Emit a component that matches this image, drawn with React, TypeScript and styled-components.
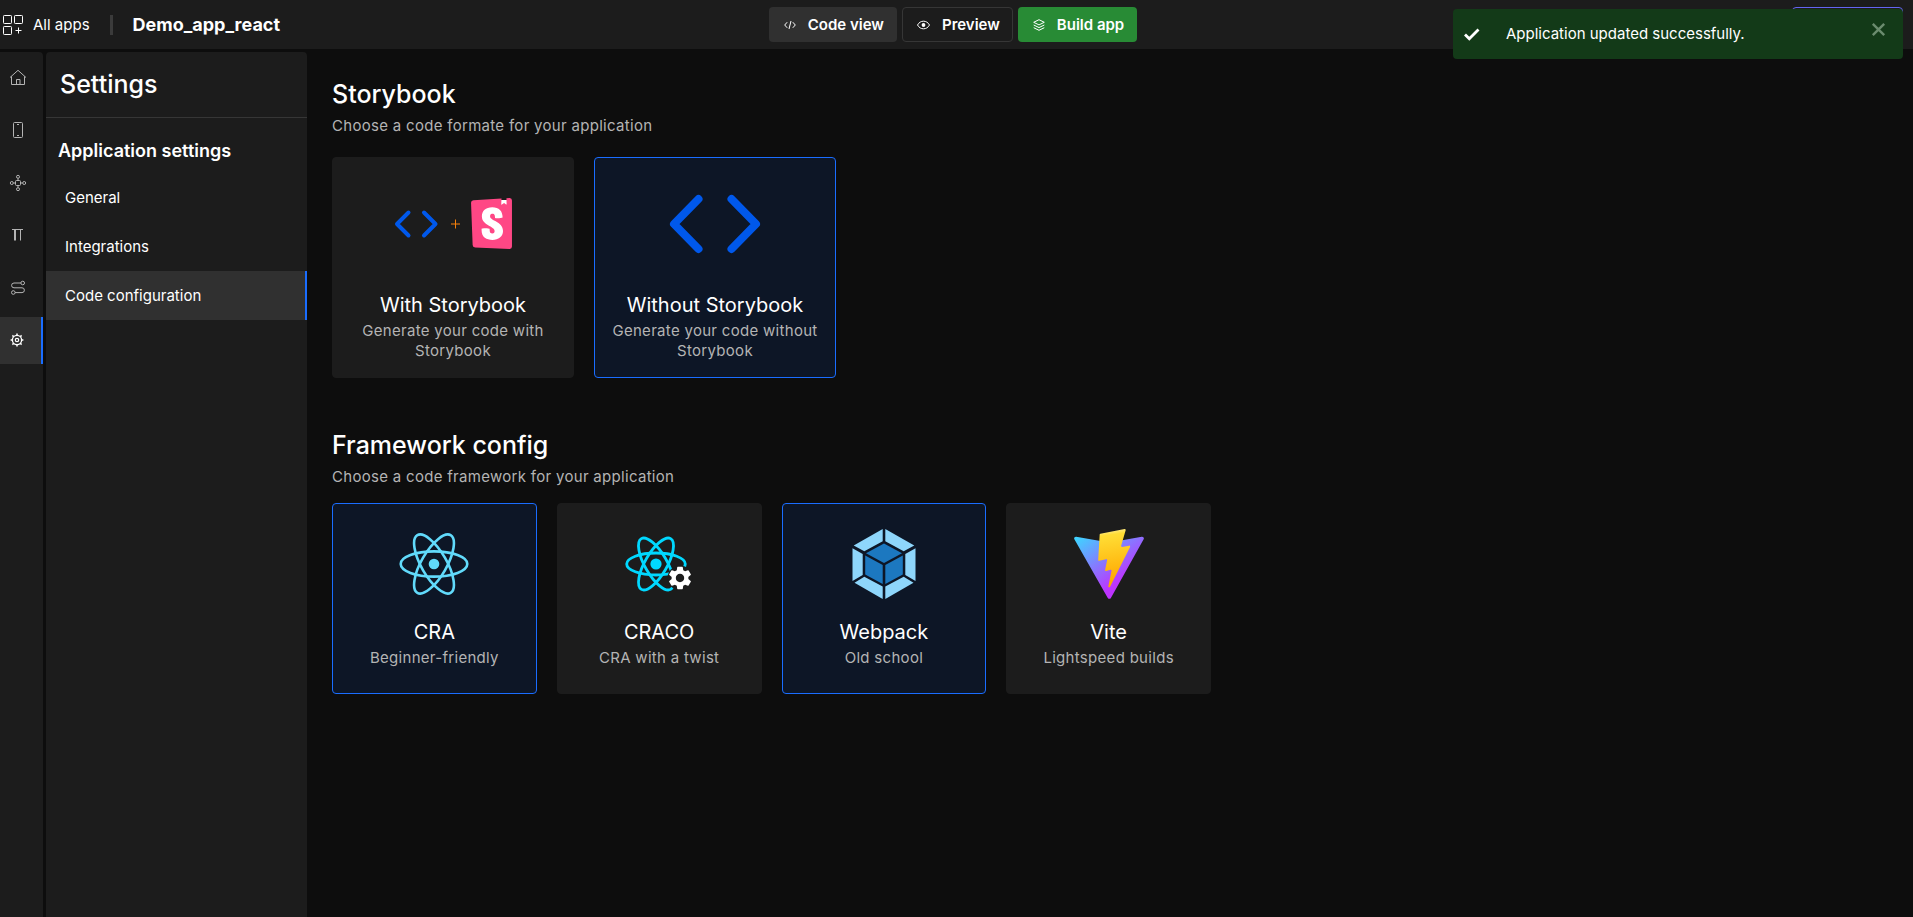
import React from "react";
import styled, { createGlobalStyle, css } from "styled-components";
import { SiStorybook } from "react-icons/si";
import { MdSettings } from "react-icons/md";

const GlobalStyle = createGlobalStyle`
  *, *::before, *::after { box-sizing: border-box; }
  body {
    margin: 0;
    background: #0d0d0d;
    color: #fff;
    font-family: Inter, "Liberation Sans", sans-serif;
    font-size: 15px;
    line-height: 20px;
  }
  h1, h2, h3, p, ul { margin: 0; padding: 0; }
  ul { list-style: none; }
  button { font: inherit; color: inherit; cursor: pointer; }
  a { color: inherit; text-decoration: none; }
  svg { display: block; flex: none; }
`;

const Page = styled.div`
  display: flex;
  flex-direction: column;
  gap: 3px;
  min-height: 100vh;
`;

const Header = styled.header`
  display: grid;
  grid-template-columns: 1fr auto 1fr;
  align-items: center;
  height: 49px;
  padding: 0 10px 0 3px;
  background: #1c1c1c;
`;

const Brand = styled.div`
  display: flex;
  align-items: center;
`;

const AllApps = styled.a`
  display: flex;
  align-items: center;
  gap: 10px;
`;

const Separator = styled.span`
  width: 3px;
  height: 20px;
  margin: 0 20px;
  background: #3b3b3b;
`;

const AppName = styled.h1`
  font-size: 18px;
  line-height: 24px;
  font-weight: 700;
`;

const Actions = styled.div`
  display: flex;
  gap: 5px;
`;

const ActionButton = styled.button<{ $tone: "filled" | "outline" | "primary" }>`
  display: flex;
  align-items: center;
  gap: 12px;
  height: 35px;
  padding: 0 12px 0 14px;
  border: 1px solid transparent;
  border-radius: 4px;
  font-weight: 600;
  background: transparent;
  ${({ $tone }) =>
    $tone === "filled"
      ? css`background: #303030;`
      : $tone === "primary"
        ? css`background: #288b35;`
        : css`border-color: #363636;`}
`;

const ProfileButton = styled.button`
  justify-self: end;
  width: 111px;
  height: 35px;
  border: 1px solid #6366f1;
  border-radius: 4px;
  background: transparent;
`;

const Body = styled.div`
  display: flex;
  flex: 1;
  gap: 3px;
`;

const Rail = styled.nav`
  width: 43px;
  padding-top: 2px;
  border-radius: 0 4px 0 0;
  background: #1c1c1c;
`;

const RailList = styled.ul`
  display: flex;
  flex-direction: column;
  justify-content: space-between;
  height: 310px;
`;

const RailLink = styled.a<{ $active?: boolean }>`
  display: flex;
  align-items: center;
  height: 47px;
  padding-left: 9px;
  color: ${({ $active }) => ($active ? "#fff" : "#b4b4b4")};
  background: ${({ $active }) => ($active ? "#303030" : "transparent")};
  border-right: 2px solid ${({ $active }) => ($active ? "#1a6dff" : "transparent")};
`;

const Sidebar = styled.aside`
  width: 261px;
  border-radius: 4px 4px 0 0;
  background: #1c1c1c;
`;

const SidebarTitle = styled.h2`
  padding: 16px 14px 17px;
  border-bottom: 1px solid #363636;
  font-size: 25px;
  line-height: 32px;
  font-weight: 500;
`;

const SidebarGroup = styled.h3`
  padding: 21px 12px 10px;
  font-size: 18px;
  line-height: 24px;
  font-weight: 600;
`;

const MenuLink = styled.a<{ $active?: boolean }>`
  display: flex;
  align-items: center;
  height: 49px;
  padding-left: 19px;
  background: ${({ $active }) => ($active ? "#303030" : "transparent")};
  border-right: 2px solid ${({ $active }) => ($active ? "#1a6dff" : "transparent")};
`;

const Main = styled.main`
  display: flex;
  flex: 1;
  flex-direction: column;
  gap: 51px;
  padding: 26px 22px;
`;

const SectionTitle = styled.h2`
  font-size: 25px;
  line-height: 32px;
  font-weight: 500;
`;

const SectionNote = styled.p`
  margin-top: 6px;
  color: #b4b4b4;
  letter-spacing: 0.02em;
`;

const Cards = styled.div<{ $columns: number; $width: number; $top: number }>`
  display: grid;
  grid-template-columns: repeat(${({ $columns }) => $columns}, 1fr);
  gap: 20px;
  max-width: ${({ $width }) => $width}px;
  margin-top: ${({ $top }) => $top}px;
`;

const Card = styled.button<{ $selected?: boolean; $large?: boolean }>`
  display: flex;
  flex-direction: column;
  align-items: center;
  padding: ${({ $large }) => ($large ? "0 12px 16px" : "8px 12px 25px")};
  border: 1px solid ${({ $selected }) => ($selected ? "#1a6dff" : "#1c1c1c")};
  border-radius: 4px;
  background: ${({ $selected }) => ($selected ? "#0d1626" : "#1c1c1c")};
`;

const CardArt = styled.span<{ $large?: boolean }>`
  display: flex;
  align-items: center;
  justify-content: center;
  height: ${({ $large }) => ($large ? 131 : 104)}px;
`;

const CardTitle = styled.span`
  font-size: 20px;
  line-height: 32px;
`;

const CardNote = styled.span`
  color: #b4b4b4;
  letter-spacing: 0.02em;
`;

const Toast = styled.div`
  position: fixed;
  top: 9px;
  right: 10px;
  display: flex;
  align-items: center;
  width: 450px;
  height: 50px;
  padding: 0 17px 0 10px;
  border-radius: 4px;
  background: #133a18;
`;

const ToastText = styled.p`
  flex: 1;
  margin-left: 26px;
`;

const CloseButton = styled.button`
  align-self: flex-start;
  margin-top: 13px;
  padding: 0;
  border: 0;
  background: none;
  color: #6b8b6e;
`;

const stroke = { fill: "none", stroke: "currentColor" } as const;

const AppsIcon = () => (
  <svg width="20" height="20" viewBox="0 0 20 20" {...stroke} aria-hidden="true">
    <rect x=".5" y=".5" width="8" height="8" rx=".8" />
    <rect x="11.5" y=".5" width="8" height="8" rx=".8" />
    <rect x=".5" y="11.5" width="8" height="8" rx=".8" />
    <path d="M15.5 12.5v6M12.5 15.5h6" />
  </svg>
);

const HomeIcon = () => (
  <svg width="18" height="18" viewBox="0 0 18 18" {...stroke} aria-hidden="true">
    <path d="M1 8.500 9 1.300 17 8.500M2.500 7.400v8.100h13V7.400M7.500 15.500v-5h3.500v5" />
  </svg>
);

const PhoneIcon = () => (
  <svg width="18" height="18" viewBox="0 0 18 18" {...stroke} aria-hidden="true">
    <rect x="4.500" y="1.500" width="9" height="15" rx="1" />
    <path d="M8 3.500h2M8 14.500h2" />
  </svg>
);

const NodesIcon = () => (
  <svg width="18" height="18" viewBox="0 0 18 18" {...stroke} aria-hidden="true">
    <rect x="6.500" y="6.500" width="5" height="5" rx="1" />
    <circle cx="9" cy="2.800" r="1.500" />
    <circle cx="9" cy="15.200" r="1.500" />
    <circle cx="2.800" cy="9" r="1.500" />
    <circle cx="15.200" cy="9" r="1.500" />
    <path d="M9 4.400v2M9 11.500v2M4.400 9h2M11.500 9h2" />
  </svg>
);

const PiIcon = () => (
  <svg width="18" height="18" viewBox="0 0 18 18" {...stroke} aria-hidden="true">
    <path d="M3 3.500h11M11.500 3.500v11" />
    <path d="M6 3.500v11" strokeWidth="2" />
  </svg>
);

const RouteIcon = () => (
  <svg width="18" height="18" viewBox="0 0 18 18" {...stroke} aria-hidden="true">
    <circle cx="13.700" cy="4" r="1.800" />
    <circle cx="4.300" cy="13.500" r="1.800" />
    <path d="M12 4H5a2.400 2.400 0 0 0 0 4.800h8a2.400 2.400 0 0 1 0 4.800H6" />
  </svg>
);

const GearIcon = () => (
  <svg width="16" height="16" viewBox="0 0 16 16" {...stroke} aria-hidden="true">
    <circle cx="8" cy="8" r="4.600" strokeWidth="1.300" />
    <circle cx="8" cy="8" r="1.700" strokeWidth="1.200" />
    <path
      strokeWidth="1.500"
      d="M8 3.400V1.600M8 12.600v1.800M3.400 8H1.600M12.600 8h1.800M4.700 4.700 3.400 3.400M11.300 4.700l1.300-1.300M4.700 11.300l-1.300 1.300M11.300 11.300l1.300 1.300"
    />
  </svg>
);

const CodeIcon = () => (
  <svg width="12" height="10" viewBox="0 0 12 10" {...stroke} aria-hidden="true">
    <path d="M3.200 2.200.7 5l2.500 2.800M8.800 2.200 11.300 5 8.800 7.800M7 1 5 9" />
  </svg>
);

const EyeIcon = () => (
  <svg width="13" height="10" viewBox="0 0 13 10" {...stroke} aria-hidden="true">
    <path d="M.5 5C2 2.400 4 1.200 6.500 1.200S11 2.400 12.500 5C11 7.600 9 8.800 6.500 8.800S2 7.600.5 5Z" />
    <circle cx="6.500" cy="5" r="1.900" fill="currentColor" stroke="none" />
  </svg>
);

const LayersIcon = () => (
  <svg width="12" height="12" viewBox="0 0 12 12" {...stroke} aria-hidden="true">
    <path d="M6 .7 11.300 3.300 6 5.900.7 3.300ZM.7 6 6 8.600 11.300 6M.7 8.700 6 11.300l5.300-2.600" />
  </svg>
);

const CheckIcon = () => (
  <svg width="17" height="14" viewBox="0 0 17 14" aria-hidden="true">
    <path d="M2 7.500 6.300 11.800 15.500 2.600" fill="none" stroke="#fff" strokeWidth="2.800" />
  </svg>
);

const CloseIcon = () => (
  <svg width="15" height="15" viewBox="0 0 15 15" {...stroke} strokeWidth="2.400" aria-hidden="true">
    <path d="M1.800 1.800l11.400 11.400M13.200 1.800l-11.400 11.400" />
  </svg>
);

const WithStorybookArt = () => (
  <svg width="118" height="52" viewBox="0 0 118 52" fill="none" aria-hidden="true">
    <g stroke="#0058eb" strokeWidth="4" strokeLinecap="round" strokeLinejoin="round">
      <path d="M14.500 14.500 3 26l11.500 11.500M30 14.500 41.500 26 30 37.500" />
    </g>
    <path d="M61.500 21.500v9M57 26h9" stroke="#f7800a" />
    <rect x="83" y="7" width="29" height="38" fill="#fff" />
    <rect x="105" y="2" width="9" height="10" fill="#fff" />
    <SiStorybook x="72" y="0" size={51} color="#ff4785" />
  </svg>
);

const CodeArt = () => (
  <svg width="92" height="60" viewBox="0 0 92 60" fill="none" aria-hidden="true">
    <g stroke="#0058eb" strokeWidth="8" strokeLinecap="round" strokeLinejoin="round">
      <path d="M29.500 5 5 30l24.500 25M62.500 5 87 30 62.500 55" />
    </g>
  </svg>
);

const ReactArt = () => (
  <svg width="70" height="62" viewBox="-35 -31 70 62" fill="none" aria-hidden="true">
    <circle r="5.300" fill="#61dafb" />
    <g stroke="#61dafb" strokeWidth="2.600">
      <ellipse rx="33.300" ry="12.600" />
      <ellipse rx="33.300" ry="12.600" transform="rotate(60)" />
      <ellipse rx="33.300" ry="12.600" transform="rotate(120)" />
    </g>
  </svg>
);

const CracoArt = () => (
  <svg width="68" height="62" viewBox="-31 -31 68 62" fill="none" aria-hidden="true">
    <circle r="5.600" fill="#00d8ff" />
    <g stroke="#00d8ff" strokeWidth="2.800">
      <ellipse rx="29.300" ry="11" />
      <ellipse rx="29.300" ry="11" transform="rotate(60)" />
      <ellipse rx="29.300" ry="11" transform="rotate(120)" />
    </g>
    <circle cx="24" cy="14" r="12.500" fill="#1c1c1c" />
    <MdSettings x="10" y="0" size={28} color="#fff" />
  </svg>
);

const WebpackArt = () => (
  <svg width="64" height="70" viewBox="0 0 64 70" aria-hidden="true">
    <g fill="#8ed6fb">
      <path d="M30.700 0v12.200L12.300 22.300 1.700 16.600ZM33.300 0v12.200l18.400 10.100 10.600-5.700Z" />
      <path d="M.5 19.200 10.700 25v21L.5 51.900ZM63.500 19.200 53.300 25v21l10.200 5.900Z" />
      <path d="M12.300 47.700 2.500 53.700 30.700 70V57.600ZM51.700 47.700l9.800 6L33.300 70V57.600Z" />
    </g>
    <g fill="#1c78c0">
      <path d="M32 14.600 50 24.200 32 34 14 24.200Z" />
      <path d="M13.200 26.500l17.500 9.600v18.800L13.200 45.400ZM50.800 26.500l-17.500 9.600v18.800l17.500-9.500Z" />
    </g>
  </svg>
);

const ViteArt = () => (
  <svg width="70" height="70" viewBox="0 0 256 257" aria-hidden="true">
    <defs>
      <linearGradient id="vite-shield" x1="-.828%" x2="57.636%" y1="7.652%" y2="78.411%">
        <stop offset="0%" stopColor="#41D1FF" />
        <stop offset="100%" stopColor="#BD34FE" />
      </linearGradient>
      <linearGradient id="vite-bolt" x1="43.376%" x2="50.316%" y1="2.242%" y2="89.03%">
        <stop offset="0%" stopColor="#FFEA83" />
        <stop offset="8.333%" stopColor="#FFDD35" />
        <stop offset="100%" stopColor="#FFA800" />
      </linearGradient>
    </defs>
    <path
      fill="url(#vite-shield)"
      d="M255.153 37.938L134.897 252.976c-2.483 4.44-8.862 4.466-11.382.048L.875 37.958c-2.746-4.814 1.371-10.646 6.827-9.67l120.385 21.517a6.537 6.537 0 0 0 2.322-.004l117.867-21.483c5.438-.991 9.574 4.796 6.877 9.62Z"
    />
    <path
      fill="url(#vite-bolt)"
      d="M185.432.063L96.44 17.501a3.268 3.268 0 0 0-2.634 3.014l-5.474 92.456a3.268 3.268 0 0 0 3.997 3.378l24.777-5.718c2.318-.535 4.413 1.507 3.936 3.838l-7.361 36.047c-.495 2.426 1.782 4.5 4.151 3.78l15.304-4.649c2.372-.72 4.652 1.36 4.15 3.788l-11.698 56.621c-.732 3.542 3.979 5.473 5.943 2.437l1.313-2.028 72.516-144.72c1.215-2.423-.88-5.186-3.54-4.672l-25.505 4.922c-2.396.462-4.435-1.77-3.759-4.114l16.646-57.705c.677-2.35-1.37-4.583-3.769-4.113Z"
    />
  </svg>
);

const railItems = [
  { label: "Home", icon: <HomeIcon /> },
  { label: "Screens", icon: <PhoneIcon /> },
  { label: "Components", icon: <NodesIcon /> },
  { label: "Typography", icon: <PiIcon /> },
  { label: "Navigation", icon: <RouteIcon /> },
  { label: "Settings", icon: <GearIcon />, active: true },
];

const menuItems = [
  { label: "General" },
  { label: "Integrations" },
  { label: "Code configuration", active: true },
];

const storybookOptions = [
  { title: "With Storybook", note: "Generate your code with Storybook", art: <WithStorybookArt /> },
  {
    title: "Without Storybook",
    note: "Generate your code without Storybook",
    art: <CodeArt />,
    selected: true,
  },
];

const frameworkOptions = [
  { title: "CRA", note: "Beginner-friendly", art: <ReactArt />, selected: true },
  { title: "CRACO", note: "CRA with a twist", art: <CracoArt /> },
  { title: "Webpack", note: "Old school", art: <WebpackArt />, selected: true },
  { title: "Vite", note: "Lightspeed builds", art: <ViteArt /> },
];

export default function App() {
  return (
    <>
      <GlobalStyle />
      <Page>
        <Header>
          <Brand>
            <AllApps href="#apps">
              <AppsIcon />
              All apps
            </AllApps>
            <Separator />
            <AppName>Demo_app_react</AppName>
          </Brand>
          <Actions>
            <ActionButton type="button" $tone="filled">
              <CodeIcon />
              Code view
            </ActionButton>
            <ActionButton type="button" $tone="outline">
              <EyeIcon />
              Preview
            </ActionButton>
            <ActionButton type="button" $tone="primary">
              <LayersIcon />
              Build app
            </ActionButton>
          </Actions>
          <ProfileButton type="button" aria-label="Profile" />
        </Header>
        <Body>
          <Rail aria-label="Workspace">
            <RailList>
              {railItems.map((item) => (
                <li key={item.label}>
                  <RailLink href="#" aria-label={item.label} $active={item.active}>
                    {item.icon}
                  </RailLink>
                </li>
              ))}
            </RailList>
          </Rail>
          <Sidebar>
            <SidebarTitle>Settings</SidebarTitle>
            <SidebarGroup>Application settings</SidebarGroup>
            <ul>
              {menuItems.map((item) => (
                <li key={item.label}>
                  <MenuLink href="#" $active={item.active}>
                    {item.label}
                  </MenuLink>
                </li>
              ))}
            </ul>
          </Sidebar>
          <Main>
            <section>
              <SectionTitle>Storybook</SectionTitle>
              <SectionNote>Choose a code formate for your application</SectionNote>
              <Cards $columns={2} $width={504} $top={21}>
                {storybookOptions.map((option) => (
                  <Card
                    key={option.title}
                    type="button"
                    aria-pressed={!!option.selected}
                    $selected={option.selected}
                    $large
                  >
                    <CardArt $large>{option.art}</CardArt>
                    <CardTitle>{option.title}</CardTitle>
                    <CardNote>{option.note}</CardNote>
                  </Card>
                ))}
              </Cards>
            </section>
            <section>
              <SectionTitle>Framework config</SectionTitle>
              <SectionNote>Choose a code framework for your application</SectionNote>
              <Cards $columns={4} $width={879} $top={16}>
                {frameworkOptions.map((option) => (
                  <Card
                    key={option.title}
                    type="button"
                    aria-pressed={!!option.selected}
                    $selected={option.selected}
                  >
                    <CardArt>{option.art}</CardArt>
                    <CardTitle>{option.title}</CardTitle>
                    <CardNote>{option.note}</CardNote>
                  </Card>
                ))}
              </Cards>
            </section>
          </Main>
        </Body>
      </Page>
      <Toast role="status">
        <CheckIcon />
        <ToastText>Application updated successfully.</ToastText>
        <CloseButton type="button" aria-label="Close">
          <CloseIcon />
        </CloseButton>
      </Toast>
    </>
  );
}
